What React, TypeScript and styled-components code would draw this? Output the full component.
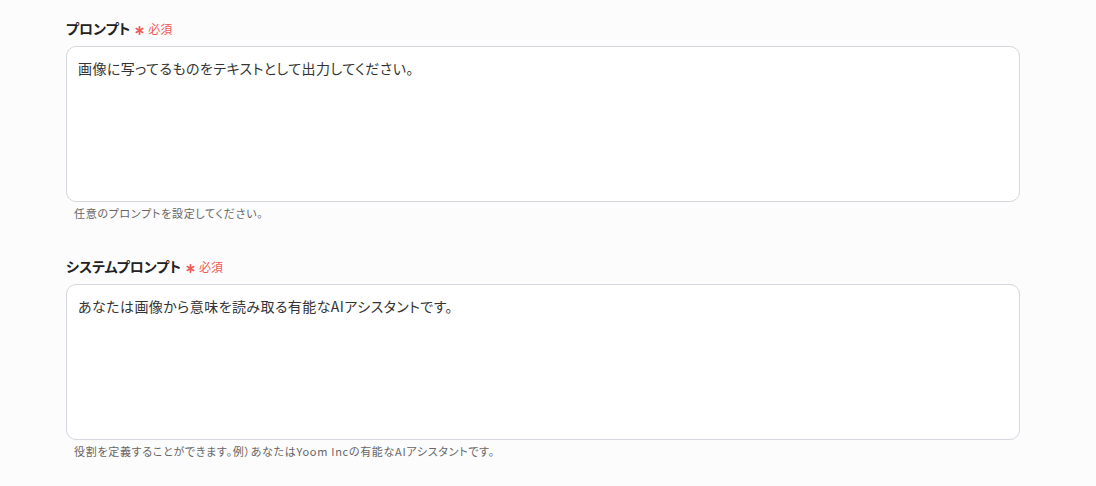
import { createGlobalStyle, styled } from 'styled-components'

const GlobalStyle = createGlobalStyle`
    html, body {
        margin: 0;
        padding: 0;
        background-color: #fcfcfd;
    }
    body {
        font-family: 'Noto Sans CJK JP', 'Noto Sans', sans-serif;
        color: #333;
    }
`

type Field = {
    label: string
    value: string
    help: string
}

const fields: Field[] = [
    {
        label: 'プロンプト',
        value: '画像に写ってるものをテキストとして出力してください。',
        help: '任意のプロンプトを設定してください。',
    },
    {
        label: 'システムプロンプト',
        value: 'あなたは画像から意味を読み取る有能なAIアシスタントです。',
        help: '役割を定義することができます。例）あなたはYoom Incの有能なAIアシスタントです。',
    },
]

// 6-spoke required mark
const Star = () => (
    <svg width="9" height="9" viewBox="0 0 10 10">
        <g stroke="#f05a56" strokeWidth="1.9" strokeLinecap="round">
            <line x1="5" y1="0.8" x2="5" y2="9.2" />
            <line x1="1.4" y1="2.9" x2="8.6" y2="7.1" />
            <line x1="1.4" y1="7.1" x2="8.6" y2="2.9" />
        </g>
    </svg>
)

function App() {
    return (
        <>
            <GlobalStyle />
            <Page>
                {fields.map((f) => (
                    <FormItem key={f.label}>
                        <LabelRow>
                            <Label>{f.label}</Label>
                            <Required>
                                <StarWrap>
                                    <Star />
                                </StarWrap>
                                必須
                            </Required>
                        </LabelRow>
                        <TextArea defaultValue={f.value} />
                        <Help>{f.help}</Help>
                    </FormItem>
                ))}
            </Page>
        </>
    )
}

export default App

const Page = styled.div`
    display: flex;
    flex-direction: column;
    gap: 35px;
    width: 954px;
    padding: 18px 0 0 66px;
`

const FormItem = styled.div`
    display: flex;
    flex-direction: column;
`

const LabelRow = styled.div`
    display: flex;
    align-items: center;
    gap: 5px;
    height: 20px;
    margin-bottom: 8px;
`

const Label = styled.span`
    font-size: 14px;
    font-weight: 700;
    color: #222;
    font-feature-settings: 'palt';
`

const Required = styled.span`
    display: flex;
    align-items: center;
    font-size: 12px;
    color: #f05a56;
    font-feature-settings: 'palt';
`

const StarWrap = styled.span`
    display: flex;
    margin-right: 4px;
    position: relative;
    top: 2px;
`

const TextArea = styled.textarea`
    box-sizing: border-box;
    width: 954px;
    height: 156px;
    padding: 10px 11px;
    border: 1px solid #d5d7de;
    border-radius: 10px;
    background-color: #fff;
    font-family: 'Noto Sans CJK JP', 'Noto Sans', sans-serif;
    font-size: 14px;
    line-height: 22px;
    letter-spacing: 0.42px;
    color: #333;
    resize: none;
    outline: none;
    font-feature-settings: 'palt';
`

const Help = styled.div`
    margin-top: 3px;
    padding-left: 8px;
    font-size: 11px;
    line-height: 16px;
    letter-spacing: 0.7px;
    color: #666;
    font-feature-settings: 'palt';
`
